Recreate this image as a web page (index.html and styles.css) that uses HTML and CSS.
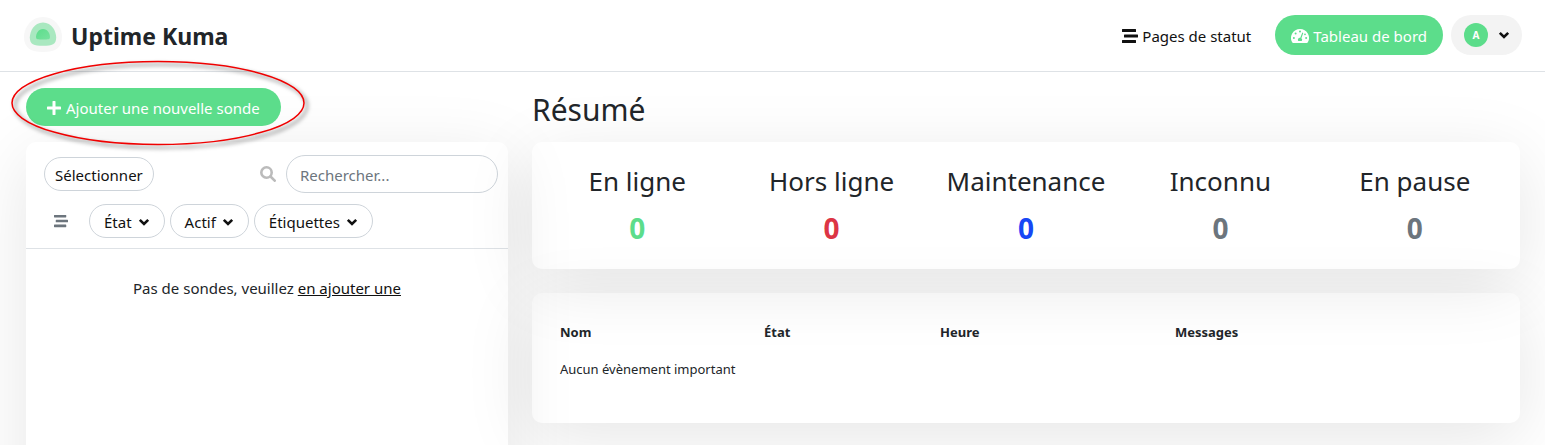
FILE: index.html
```html
<!DOCTYPE html>
<html lang="fr">
<head>
<meta charset="utf-8">
<title>Uptime Kuma</title>
<meta name="viewport" content="width=device-width, initial-scale=1">
<link rel="stylesheet" href="styles.css">
</head>
<body>
<svg class="sprite" aria-hidden="true">
  <symbol id="bars" viewBox="0 0 16 16"><path d="M.5 1h13a.5.500 0 0 1 .5.500v2a.5.500 0 0 1-.5.500H.5a.5.500 0 0 1-.5-.5v-2A.5.500 0 0 1 .5 1zm2 5.500h13a.5.500 0 0 1 .5.500v2a.5.500 0 0 1-.5.500h-13A.5.500 0 0 1 2 9V7a.5.500 0 0 1 .5-.5zm-2 5.500h13a.5.500 0 0 1 .5.500v2a.5.500 0 0 1-.5.500H.5a.5.500 0 0 1-.5-.5v-2a.5.500 0 0 1 .5-.5z"/></symbol>
  <symbol id="chevron" viewBox="0 0 12 10"><path d="M1.800 2.800 6 7 10.200 2.800" fill="none" stroke="currentColor" stroke-width="2.600"/></symbol>
</svg>
<header class="topbar">
  <a class="brand" href="#">
    <svg class="logo" viewBox="0 0 38 38" aria-hidden="true">
      <defs><linearGradient id="g" x1="0" y1="0" x2="1" y2="1"><stop offset="0" stop-color="#5cdd8b"/><stop offset="1" stop-color="#78e29f"/></linearGradient></defs>
      <path d="M19 1C31 1 38 12 38 21c0 11-7 15-19 15S0 32 0 21C0 12 7 1 19 1z" fill="#f7f7f7"/>
      <path d="M19 6.500c9 0 13.200 9 13.200 15 0 7-4 8.300-13.200 8.300S5.800 28.500 5.800 21.500c0-6 4.200-15 13.200-15z" fill="#a9e8c0"/>
      <path d="M19 13c4.500 0 7 4.500 7 8 0 2.500-2 2.500-7 2.500s-7 0-7-2.500c0-3.500 2.500-8 7-8z" fill="url(#g)"/>
    </svg>
    <span class="brand-name">Uptime Kuma</span>
  </a>
  <nav class="nav">
    <a class="nav-link" href="#"><svg class="icon" aria-hidden="true"><use href="#bars"/></svg>Pages de statut</a>
    <a class="nav-link active" href="#"><svg class="icon gauge" viewBox="0 0 18 16" aria-hidden="true"><path fill="currentColor" d="M9 1a9 9 0 0 0-7.700 13.600c.2.300.5.400.8.400h13.800c.3 0 .6-.1.800-.4A9 9 0 0 0 9 1z"/><g fill="#5cdd8b"><circle cx="9" cy="3.600" r="1"/><circle cx="4.600" cy="5.600" r="1"/><circle cx="2.900" cy="10" r="1"/><circle cx="15.100" cy="10" r="1"/><circle cx="14" cy="6.300" r=".9"/><path d="m11.300 4.600 1 .4-1.900 5.200a2 2 0 0 1 .3 2.800H7.300a2 2 0 0 1 2-3.200z"/></g></svg>Tableau de bord</a>
    <button class="profile" type="button" aria-label="Profil"><span class="avatar">A</span><svg class="chevron" aria-hidden="true"><use href="#chevron"/></svg></button>
  </nav>
</header>
<main class="dashboard">
  <section class="sidebar">
    <div class="add-row">
      <a class="add-button" href="#"><svg class="plus" viewBox="0 0 14 14" aria-hidden="true"><path d="M7 1v12M1 7h12" stroke="currentColor" stroke-width="3" stroke-linecap="round"/></svg>Ajouter une nouvelle sonde</a>
      <svg class="highlight" viewBox="0 0 300 94" aria-hidden="true"><ellipse cx="148" cy="44" rx="146" ry="41.500"/></svg>
    </div>
    <div class="card monitors">
      <div class="list-header">
        <div class="tools">
          <button class="pill" type="button">Sélectionner</button>
          <label class="search"><svg class="search-icon" viewBox="0 0 16 16" role="img" aria-label="Rechercher"><circle cx="6.500" cy="6.500" r="5.200"/><path d="m10.500 10.500 4.200 4.200"/></svg><input type="search" placeholder="Rechercher..."></label>
        </div>
        <div class="filters">
          <button class="collapse" type="button" aria-label="Grouper"><svg aria-hidden="true"><use href="#bars"/></svg></button>
          <button class="pill filter" type="button">État<svg class="chevron" aria-hidden="true"><use href="#chevron"/></svg></button>
          <button class="pill filter" type="button">Actif<svg class="chevron" aria-hidden="true"><use href="#chevron"/></svg></button>
          <button class="pill filter" type="button">Étiquettes<svg class="chevron" aria-hidden="true"><use href="#chevron"/></svg></button>
        </div>
      </div>
      <p class="empty">Pas de sondes, veuillez <a href="#">en ajouter une</a></p>
    </div>
  </section>
  <section class="content">
    <h1>Résumé</h1>
    <div class="card stats">
      <div class="stat"><h3>En ligne</h3><span class="num up">0</span></div>
      <div class="stat"><h3>Hors ligne</h3><span class="num down">0</span></div>
      <div class="stat"><h3>Maintenance</h3><span class="num maintenance">0</span></div>
      <div class="stat"><h3>Inconnu</h3><span class="num">0</span></div>
      <div class="stat"><h3>En pause</h3><span class="num">0</span></div>
    </div>
    <div class="card events">
      <table>
        <thead><tr><th class="c-name">Nom</th><th class="c-state">État</th><th class="c-time">Heure</th><th>Messages</th></tr></thead>
        <tbody><tr><td colspan="4">Aucun évènement important</td></tr></tbody>
      </table>
    </div>
  </section>
</main>
</body>
</html>
```
FILE: styles.css
```css
* { box-sizing: border-box; }
body {
  margin: 0;
  min-height: 100vh;
  overflow: hidden;
  display: flex;
  flex-direction: column;
  background: #fff;
  color: #212529;
  font: 15px/24px "Noto Sans", "Open Sans", sans-serif;
}
a { color: inherit; text-decoration: none; }
button, input { font: inherit; color: #111; }
button { cursor: pointer; }
h1, h3, p { margin: 0; font-weight: 400; }
.sprite { position: absolute; width: 0; height: 0; }
svg { flex: none; fill: currentColor; }

.topbar {
  display: flex;
  justify-content: space-between;
  align-items: center;
  height: 72px;
  padding: 0 23px 2px 24px;
  border-bottom: 1px solid #dee2e6;
}
.brand { display: flex; align-items: center; gap: 9px; }
.logo { width: 38px; height: 38px; }
.brand-name { font-size: 23px; font-weight: 700; line-height: 32px; padding-top: 3px; }
.nav { display: flex; align-items: center; gap: 8px; }
.nav-link {
  display: flex;
  align-items: center;
  gap: 4px;
  height: 40px;
  padding: 2px 16px 0;
  border-radius: 20px;
  color: #111;
}
.nav-link.active { background: #5cdd8b; color: #fff; }
.icon { width: 16px; height: 16px; }
.gauge { width: 18px; }
.profile {
  display: flex;
  align-items: center;
  gap: 10px;
  height: 40px;
  padding: 0 12px 0 13px;
  border: 0;
  border-radius: 20px;
  background: #f3f3f3;
}
.avatar {
  width: 24px;
  border-radius: 12px;
  background: #5cdd8b;
  color: #fff;
  font-size: 10px;
  font-weight: 700;
  text-align: center;
}
.chevron { width: 12px; height: 10px; }

.dashboard {
  flex: 1;
  display: grid;
  grid-template-columns: repeat(3, 1fr);
  gap: 24px;
  padding: 16px 25px 0 26px;
}
.sidebar { display: flex; flex-direction: column; gap: 16px; }
.content { grid-column: span 2; }
.add-row { position: relative; display: flex; }
.add-button {
  display: flex;
  align-items: center;
  gap: 5px;
  height: 38px;
  padding: 2px 21px 0;
  border-radius: 19px;
  background: #5cdd8b;
  color: #fff;
}
.plus { width: 14px; height: 14px; }
.highlight {
  position: absolute;
  left: -16px;
  top: -29px;
  width: 300px;
  height: 94px;
  overflow: visible;
  fill: none;
  stroke: #f00000;
  stroke-width: 1.5;
  filter: drop-shadow(3px 3px 2px rgba(0, 0, 0, .6));
  pointer-events: none;
}
/* Cards are see-through so that neighbouring shadows tint their edges */
.card { border-radius: 10px; box-shadow: 0 15px 70px rgba(0, 0, 0, .1); }
.monitors { flex: 1; min-height: 400px; }
.list-header { padding: 13px 10px 10px 18px; border-bottom: 1px solid #dee2e6; }
.tools { display: flex; justify-content: space-between; align-items: center; }
.pill { height: 34px; padding: 2px 10px 0; border: 1px solid #ced4da; border-radius: 17px; background: #fff; }
.search { display: flex; align-items: center; gap: 10px; }
.search-icon { width: 16px; height: 16px; fill: none; stroke: #bbb; stroke-width: 2.6; stroke-linecap: round; }
.search input {
  width: 212px;
  height: 38px;
  padding: 2px 13px 0;
  border: 1px solid #ced4da;
  border-radius: 19px;
  background: #fff;
}
.search input::placeholder { color: #6c757d; opacity: 1; }
.filters { display: flex; align-items: center; gap: 5px; margin-top: 11px; }
.collapse { display: flex; width: 40px; height: 24px; padding: 5px 10px; border: 0; background: none; color: #6c757d; }
.collapse svg { width: 14px; height: 14px; }
.filter { display: flex; align-items: center; gap: 6px; padding: 2px 14px 0; }
.empty { margin-top: 27px; text-align: center; }
.empty a { color: #111; text-decoration: underline; }

h1 { font-size: 30px; line-height: 38px; padding-top: 3px; margin-bottom: 13px; }
.stats { display: grid; grid-template-columns: repeat(5, 1fr); padding: 22px 8px; text-align: center; }
.stat h3 { font-size: 26px; line-height: 34px; margin-bottom: 11px; }
.num { display: block; font-size: 28px; font-weight: 700; line-height: 38px; color: #6c757d; }
.num.up { color: #5cdd8b; }
.num.down { color: #dc3545; }
.num.maintenance { color: #1747f5; }
.events { margin-top: 24px; padding: 21px 20px 19px; min-height: 130px; font-size: 13px; line-height: 21px; }
table { width: 100%; border-collapse: collapse; table-layout: fixed; }
th, td { padding: 8px; text-align: left; }
.c-name { width: 204px; }
.c-state { width: 176px; }
.c-time { width: 235px; }
```
